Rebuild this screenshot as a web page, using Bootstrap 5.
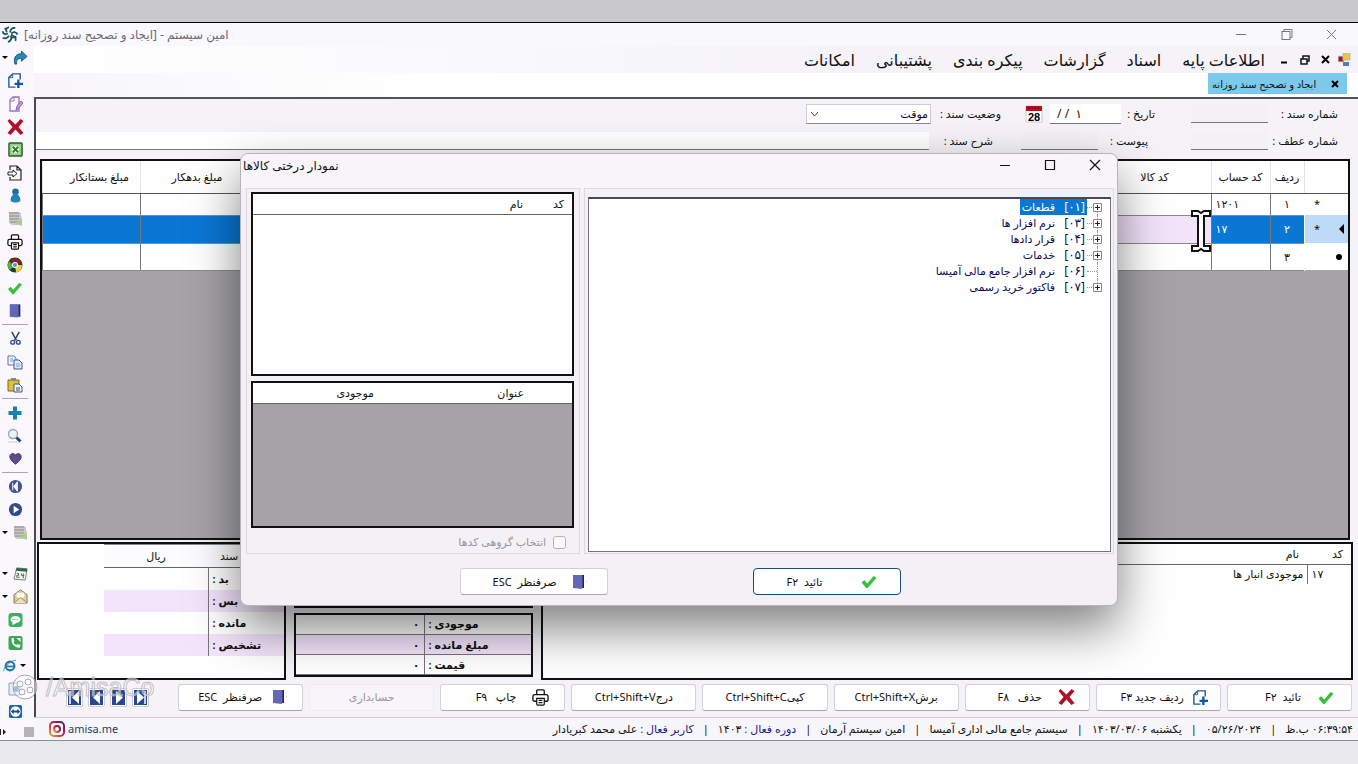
<!DOCTYPE html>
<html lang="fa">
<head>
<meta charset="utf-8">
<meta name="viewport" content="width=device-width, initial-scale=1">
<title>امین سیستم</title>
<link href="https://cdn.jsdelivr.net/npm/bootstrap@5.3.0/dist/css/bootstrap.min.css" rel="stylesheet">
<style>
  body { font-family: "Noto Sans", "DejaVu Sans", sans-serif; font-size: 11px; line-height: 16px; color: #111; background: #eaeaed; }
  button, input, select { font: inherit; color: inherit; }
  .strip-top { height: 23px; background: #c9c9cb; border-bottom: 1px solid #000; }
  .strip-end { height: 24px; border-top: 1px solid #8a8c9c; }
  .app { background: #f5f3f7; }
  .titlebar { height: 23px; background: #f9f8fc; color: #6c6a70; }
  .titlebar .caption { font-size: 12px; }
  .plain { border: 0; background: none; padding: 0; display: inline-flex; align-items: center; justify-content: center; }
  .win-btn { width: 45px; height: 22px; }
  .tools { width: 34px; flex: none; background: #faf8fc; }
  .tools .plain { height: 23px; width: 30px; position: relative; }
  .tools .drop::before { content: ""; position: absolute; left: 2px; top: 10px; border: 3px solid transparent; border-top-color: #000; border-bottom: 0; }
  .tools .drop svg { margin-left: 10px; }
  .tools .drop-end::before { left: 20px; }
  .tools .drop-end svg { margin-left: -10px; }
  .rule { width: 26px; height: 1px; margin: 2px; background: #a9a7ad; }
  .space { height: 18px; }
  .menu { height: 27px; background: linear-gradient(90deg, #fff, #f5f3f8 60%); padding-right: 7px; }
  .menu a { font-size: 16px; line-height: 24px; color: #111; text-decoration: none; }
  .tabs { height: 26px; background: linear-gradient(90deg, #f7f5f9, #fff 30%); border-bottom: 2px solid #55535a; padding: 0 11px 3px 0; }
  .doc-tab { background: #7cc9ec; height: 21px; width: 139px; font-size: 10px; }
  .sheet { border-left: 2px solid #4b4950; }
  .form-line { height: 30px; padding-right: 13px; }
  .form-line2 { height: 24px; }
  .form-line label { flex: none; white-space: nowrap; font-size: 11px; }
  .l1 { width: 77px; padding-right: 7px; }
  .l2 { width: 70px; padding-right: 36px; }
  .l3 { width: 87px; padding-right: 17px; }
  .l4 { width: 93px; padding-right: 43px; }
  .l5 { width: 92px; padding-right: 28px; }
  .field { border: 0; border-bottom: 1px solid #77757b; height: 18px; width: 77px; background: #f3f1f5; border-radius: 0; padding: 0 4px; min-width: 0; }
  .field-date { width: 71px; height: 20px; background: #fff; font-size: 12px; }
  .combo { width: 125px; height: 20px; background: #fff; border: 1px solid #cfccd3; border-bottom-color: #8d8b91; padding: 0 2px; appearance: none; }
  .combo-box { position: relative; }
  .combo-box svg { position: absolute; left: 4px; top: 6px; }
  .ledger { border: 2px solid #111; background: #a5a3a6; margin: 6px 8px 2px 4px; }
  .ledger table, .grid-table { width: 100%; table-layout: fixed; border-collapse: collapse; }
  .ledger th { height: 32px; background: #fff; font-weight: 400; text-align: center; border-bottom: 1px solid #555; border-left: 1px solid #e4e2e6; }
  .ledger td { height: 27px; background: #fff; border-left: 1px solid #77757b; border-bottom: 1px solid #8b898e; padding: 0 4px; }
  .ledger tr.short td { height: 22px; }
  .ledger tr.current td { background: #0a77d5; color: #fff; height: 28px; }
  .ledger tr.current td.mark { background: #bddaf6; color: #111; }
  .ledger tr.current td.item { background: #f2e3fb; }
  .ledger td.mark { border-bottom: 0; border-left-color: #fff; }
  .mark .lead-slot { width: 5px; flex: none; }
  .num { text-align: center; } .code { text-align: left !important; }
  .panels { height: 138px; gap: 8px; margin: 0 5px 0 1px; }
  .pane { border: 2px solid #111; background: #fff; }
  .grid-table th { font-weight: 400; height: 20px; border-bottom: 1px solid #666; text-align: right; }
  .grid-table td { height: 20px; padding: 0; }
  .totals td { height: 22px; font-weight: 600; }
  .totals th { height: 23px; text-align: center; background: #fcfbfd; border-top: 1px solid #888; }
  .totals td + td, .prices td + td { border-right: 1px solid #77757b; }
  .tint td { background: #f3e4fb; }
  .prices td { font-weight: 600; height: 20px; border-bottom: 1px solid #77757b; padding: 0 4px; }
  .actions { display: grid; grid-template-columns: repeat(9, minmax(0, 1fr)) 132px; align-items: center; height: 37px; gap: 6px; padding: 0 6px 3px 4px; }
  .act { height: 27px; background: #fff; border: 1px solid #d4d1d8; border-bottom-color: #aaa7af; border-radius: 3px; padding: 0; white-space: pre; min-width: 0; }
  .act:disabled { opacity: 1; background: #f7f5f9; border-color: #eeecf1; color: #9a989d; }
  .act svg { flex: none; }
  .early { justify-content: flex-start; padding-right: 17px; }
  .steps { padding-right: 23px; gap: 5px; }
  .step { width: 17px; height: 19px; border: 1px solid #cfccd6; border-radius: 2px; background: #fff; padding: 0; }
  .status { height: 23px; border-top: 1px solid #d0cdd4; background: #f7f6fa; padding: 0 5px 0 15px; }
  .status .bar { padding: 0 9px; }
  .status a { color: #1b3f66; text-decoration: none; margin-right: auto; gap: 3px; }
  .key { color: #1d1490; }
  .dialog { position: absolute; top: 153px; left: 50%; width: 878px; max-width: 100%; transform: translateX(-50%); background: #f3f1f5; border: 1px solid #b7b4bb; border-radius: 8px; box-shadow: 0 22px 50px rgba(0,0,0,.5); padding: 0 3px 0 5px; z-index: 5; }
  .dialog-head { height: 34px; margin: 0 -3px 0 -5px; padding-left: 2px; background: #f7f5fa; border-radius: 8px 8px 0 0; }
  .dialog-head span { font-size: 12px; line-height: 24px; }
  .group { border: 1px solid #dddae0; height: 366px; }
  .group-side { width: 334px; flex: none; padding: 3px 5px 0 4px; }
  .list-pane { height: 184px; }
  .stock-pane { height: 147px; background: #a5a3a6; margin-top: 5px; }
  .stock-pane th { background: #fff; }
  .tree-group { padding: 8px 2px 1px 3px; }
  .tree { height: 355px; background: #fff; border: 1px solid #77757b; border-top: 2px solid #4b4950; margin: 0; padding: 0 7px 0 0; list-style: none; color: #0c0c55; }
  .tree li { height: 16px; display: flex; align-items: center; position: relative; }
  .tree li::before { content: ""; position: absolute; right: 5px; top: 0; height: 16px; border-left: 1px dotted #999; }
  .tree li:last-child::before { height: 8px; } .tree li:first-child::before { top: 6px; height: 10px; }
  .knob { width: 11px; flex: none; position: relative; display: flex; justify-content: center; }
  .twig { width: 5px; border-top: 1px dotted #999; } .twig-long { width: 10px; margin-right: 6px; }
  .tree .tag { display: flex; height: 16px; padding: 0 2px; align-items: center; }
  .tree .tag b { font-weight: 400; width: 30px; font-size: 12px; }
  .picked { background: #0a77d5; color: #fff; }
  .dialog-foot { height: 51px; gap: 145px; padding-top: 4px; }
  .dialog-foot .act { flex: 0 0 148px; }
  .dialog-foot .main { border: 1px solid #1a4a77; border-radius: 4px; }
  .group-check { color: #98959c; height: 28px; }
  .group-check input { width: 13px; height: 13px; margin: 0; border-color: #b5b2ba; background: #faf9fb; }
  .watermark { position: absolute; left: 11px; bottom: 63px; z-index: 6; font: 25px/28px "Liberation Sans", sans-serif; color: rgba(255,255,255,.5); -webkit-text-stroke: 1px rgba(170,167,175,.7); pointer-events: none; }
  .caret { position: absolute; left: 1191px; top: 210px; z-index: 6; }
</style>
</head>
<body class="d-flex flex-column min-vh-100 position-relative overflow-hidden">
<svg width="0" height="0" class="position-absolute">
  <symbol id="redo" viewBox="0 0 16 16"><path d="M2 15C0 7 4 4 9 4V1l6 6-6 5V9C6 9 3 10 4 15z" fill="#2a86b4" stroke="#17597c"/></symbol>
  <symbol id="newdoc" viewBox="0 0 18 18"><path d="M9 16H2V6l4-4h8v6" fill="#fff" stroke="#245a9b" stroke-width="1.5"/><path d="M2 6h4V2" fill="none" stroke="#245a9b"/><path d="M12 8v9M8 12.500h9" stroke="#1356a8" stroke-width="2.500"/></symbol>
  <symbol id="edit" viewBox="0 0 16 16"><path d="M3 15h9V1H6L3 4z" fill="#fff" stroke="#9a6fb5" stroke-width="1.300"/><path d="M3 5h4V1" fill="none" stroke="#9a6fb5"/><path d="m9 14 1-4 4-5 2 2-4 5z" fill="#c79bdc" stroke="#8c5cab"/></symbol>
  <symbol id="cross" viewBox="0 0 16 16"><path d="M2 0 8 5.500 13 0l3 2-5 6 5 6-3 2-5-5.500L3 16l-3-2 5-6-5-6z" fill="#b00f28"/></symbol>
  <symbol id="excel" viewBox="0 0 16 16"><rect x="1" y="1" width="14" height="14" rx="1" fill="#8fd082" stroke="#2b5a2c" stroke-width="1.500"/><rect x="4" y="4" width="8" height="8" fill="#e8f8e2"/><path d="m5 5 6 6m0-6-6 6" stroke="#1f7a2c" stroke-width="2"/></symbol>
  <symbol id="export" viewBox="0 0 16 16"><path d="M3 5V1h7l4 4v10H3v-3M10 1v4h4" fill="none" stroke="#222" stroke-width="1.200"/><path d="M1 7h5V5l4 3.500L6 12v-2H1z" fill="#fff" stroke="#222"/></symbol>
  <symbol id="user" viewBox="0 0 16 16"><circle cx="8" cy="4" r="3.500" fill="#1c6e9f"/><path d="M8 5c3 2 6 5 5 9-3 2-7 2-10 0-1-4 2-7 5-9z" fill="#2285ba"/></symbol>
  <symbol id="servers" viewBox="0 0 16 16"><path d="M2 1h9l3 1v3l1 2v7H5l-3-2z" fill="#c9c9c5"/><path d="M2 2h10M2 5h10M2 8h10M3 11h9" stroke="#8a8a88" stroke-width="1"/><path d="m8 12 7-4v7z" fill="#a9cc8c"/></symbol>
  <symbol id="printer" viewBox="0 0 18 18"><path d="M5 6V2q0-1 1-1h6q1 0 1 1v4M5 13H3q-2 0-2-2V8q0-2 2-2h12q2 0 2 2v3q0 2-2 2h-2" fill="#fff" stroke="#111" stroke-width="1.400"/><path d="M5 10h8v6q0 1-1 1H6q-1 0-1-1zM7 12h4M7 14.500h4" fill="#fff" stroke="#111" stroke-width="1.300"/></symbol>
  <symbol id="chrome" viewBox="0 0 16 16"><circle cx="8" cy="8" r="7.500" fill="#183d2c"/><path d="M8 8 3 2q5-3 11 2l1 3z" fill="#8c2028"/><path d="M8 8h7q0 6-6 7.500z" fill="#f0cd3b"/><path d="M7 9 2 4q-3 6 1 9z" fill="#56ae3e"/><circle cx="8" cy="8" r="3" fill="#fff"/><circle cx="8" cy="8" r="2" fill="#5b8fc8"/></symbol>
  <symbol id="tick" viewBox="0 0 16 16"><path d="m0 9 3-2.500L6 10l7-8 3 2-9.500 11H5z" fill="#35c03d"/></symbol>
  <symbol id="door" viewBox="0 0 16 16"><path d="M2 1h11v13H2z" fill="#3b3f94"/><path d="M2 1h9v14l-9-1z" fill="#6468b4"/><path d="M12 1h1v13h-1" fill="#222659"/><path d="m15 6 1 2-1 1z" fill="#e4d79a"/></symbol>
  <symbol id="scissors" viewBox="0 0 16 16"><path d="M4 1 9 10M12 1 7 10" stroke="#39445c" stroke-width="1.600"/><circle cx="5" cy="12" r="2" fill="none" stroke="#2c4fa0" stroke-width="1.500"/><circle cx="11" cy="12" r="2" fill="none" stroke="#2c4fa0" stroke-width="1.500"/></symbol>
  <symbol id="copy" viewBox="0 0 16 16"><path d="M1 2h6l2 2v7H1z" fill="#eef3fc" stroke="#61779f"/><path d="M7 6h5l3 3v6H7z" fill="#dfe8f8" stroke="#3f5b93"/><path d="M3 5h3M3 7h3M9 10h4M9 12h4" stroke="#7f9cd0"/></symbol>
  <symbol id="paste" viewBox="0 0 16 16"><path d="M1 3h11v11H1z" fill="#e1c038" stroke="#7c661c"/><path d="M4 1h5v3H4z" fill="#8a8a8a"/><path d="M7 7h5l3 3v5H7z" fill="#f3f6fc" stroke="#3f5b93"/><path d="M9 11h4M9 13h4" stroke="#444"/></symbol>
  <symbol id="plus" viewBox="0 0 16 16"><path d="M6 1.500h4V6h4.500v4H10v4.500H6V10H1.500V6H6z" fill="#1681b3"/></symbol>
  <symbol id="lens" viewBox="0 0 16 16"><circle cx="6" cy="6" r="4.500" fill="#e8f2fb" stroke="#9aa6b5" stroke-width="1.300"/><path d="m9.500 9.500 4 4" stroke="#1d4a70" stroke-width="3"/><path d="M1 14h9" stroke="#ccc"/></symbol>
  <symbol id="heart" viewBox="0 0 16 16"><path d="M8 14Q1 9 2 5q2-4 6-1 4-3 6 1 1 4-6 9z" fill="#5e4a8b" stroke="#4a3977"/></symbol>
  <symbol id="prev" viewBox="0 0 16 16"><circle cx="8" cy="8" r="7" fill="#44548e"/><path d="M5 4v8" stroke="#fff"/><path d="M10 3 6 8l4 5z" fill="#fff" stroke="#fff"/></symbol>
  <symbol id="next" viewBox="0 0 16 16"><circle cx="8" cy="8" r="7" fill="#34488c"/><path d="m6 4 6 4-6 4z" fill="#fff"/></symbol>
  <symbol id="cal" viewBox="0 0 16 16"><path d="m4 2 11 1-2 12-12-1z" fill="#f4f4ee" stroke="#777"/><path d="m4 2 11 1v3L3 5z" fill="#2e6553"/><path d="M4 8h2v2H4v2h3M9 8v2h3M11 8v5" fill="none" stroke="#4b6a4c"/></symbol>
  <symbol id="mail" viewBox="0 0 16 16"><path d="m1 6 7-5 7 5v9H1z" fill="#e0cd9e" stroke="#8a774d"/><path d="M4 4h8v4l-4 3-4-3z" fill="#fff"/><path d="m1 15 7-6 7 6" fill="#f0e1ba" stroke="#9b8658"/></symbol>
  <symbol id="sms" viewBox="0 0 16 16"><rect x="1" y="1" width="14" height="14" rx="3" fill="#3fae62"/><ellipse cx="8" cy="7.500" rx="5" ry="3.500" fill="#fff"/><path d="m5 9 0 4 4-2z" fill="#fff"/><path d="M5 7.500h6" stroke="#3fae62" stroke-dasharray="1 1"/></symbol>
  <symbol id="phone" viewBox="0 0 16 16"><rect x="1" y="1" width="14" height="14" rx="2" fill="#3fa556"/><path d="M4 3q-1 8 8 10l1-3-3-1-1 1Q6 9 6 7l1-1-1-3zM9 3h4v4" fill="#fff"/></symbol>
  <symbol id="ie" viewBox="0 0 16 16"><circle cx="8" cy="8" r="5" fill="none" stroke="#1f77a8" stroke-width="2.500"/><path d="M4 8.500h9" stroke="#1f77a8" stroke-width="2"/><path d="M1 14Q0 10 7 5t8-3" fill="none" stroke="#2f8fc4"/></symbol>
  <symbol id="sheetic" viewBox="0 0 16 16"><path d="M2 2h11v12H2z" fill="#e8eef5" stroke="#8ba0b7"/><circle cx="9" cy="8" r="3" fill="#4a7fae"/></symbol>
  <symbol id="tv" viewBox="0 0 16 16"><rect x="1" y="1" width="14" height="14" rx="2" fill="#1769a8"/><circle cx="8" cy="8" r="5.500" fill="#fff"/><path d="m3 8 3-3v2h4V5l3 3-3 3V9H6v2z" fill="#17508a"/></symbol>
  <symbol id="swirl" viewBox="0 0 16 16"><g fill="none" stroke="#20505c" stroke-width="1.700"><path d="M7 1Q3 2 5 6M1 5q1 4 5 2M1 11q4 2 6-2M6 15q4-1 3-6M13 14q2-3-4-6M15 8q-2-4-6-1M13 2Q9 1 8 6M10 11l4-1M3 2l2 2"/></g></symbol>
  <symbol id="expand" viewBox="0 0 9 9"><path d="M.5.5h8v8h-8z" fill="#fff" stroke="#888"/><path d="M2 4.500h5M4.500 2v5" stroke="#222"/></symbol>
  <symbol id="stepicon" viewBox="0 0 13 15"><path d="M0 0h13v15H0z" fill="#27498c"/><path d="M10 1 3 7.500l7 6.500z" fill="#fff"/></symbol>
</svg>

<div class="strip-top"></div>
<div class="app d-flex flex-column flex-grow-1">
  <header class="titlebar d-flex align-items-center">
    <svg width="20" height="17"><use href="#swirl"/></svg>
    <span dir="rtl" class="caption px-1">امین سیستم - [ایجاد و تصحیح سند روزانه]</span>
    <div class="ms-auto d-flex pe-1">
      <button class="plain win-btn" aria-label="کوچک"><svg width="11" height="11"><path d="M0 5.500h10" stroke="#777"/></svg></button>
      <button class="plain win-btn" aria-label="بازگردانی"><svg width="12" height="12" fill="none" stroke="#777"><rect x="1" y="2.500" width="8" height="8"/><path d="M3 2.500v-2h8v8H9"/></svg></button>
      <button class="plain win-btn" aria-label="بستن"><svg width="11" height="11"><path d="m1 1 9 9m0-9-9 9" stroke="#777"/></svg></button>
    </div>
  </header>
  <div class="d-flex flex-grow-1">
    <nav class="tools d-flex flex-column">
      <button class="plain drop" aria-label="بازگشت"><svg width="15" height="15"><use href="#redo"/></svg></button>
      <button class="plain" aria-label="جدید"><svg width="17" height="17"><use href="#newdoc"/></svg></button>
      <button class="plain" aria-label="ویرایش"><svg width="16" height="16"><use href="#edit"/></svg></button>
      <button class="plain" aria-label="حذف"><svg width="17" height="16"><use href="#cross"/></svg></button>
      <button class="plain" aria-label="اکسل"><svg width="15" height="15"><use href="#excel"/></svg></button>
      <button class="plain" aria-label="ارسال"><svg width="16" height="16"><use href="#export"/></svg></button>
      <button class="plain" aria-label="کاربر"><svg width="15" height="15"><use href="#user"/></svg></button>
      <button class="plain" aria-label="سرور"><svg width="16" height="16"><use href="#servers"/></svg></button>
      <button class="plain" aria-label="چاپ"><svg width="16" height="16"><use href="#printer"/></svg></button>
      <button class="plain" aria-label="مرورگر"><svg width="16" height="16"><use href="#chrome"/></svg></button>
      <button class="plain" aria-label="تائید"><svg width="16" height="14"><use href="#tick"/></svg></button>
      <button class="plain" aria-label="خروج"><svg width="15" height="16"><use href="#door"/></svg></button>
      <div class="rule"></div>
      <button class="plain" aria-label="برش"><svg width="15" height="15"><use href="#scissors"/></svg></button>
      <button class="plain" aria-label="کپی"><svg width="16" height="16"><use href="#copy"/></svg></button>
      <button class="plain" aria-label="درج"><svg width="16" height="16"><use href="#paste"/></svg></button>
      <div class="rule"></div>
      <button class="plain" aria-label="افزودن"><svg width="16" height="16"><use href="#plus"/></svg></button>
      <button class="plain" aria-label="جستجو"><svg width="16" height="16"><use href="#lens"/></svg></button>
      <button class="plain" aria-label="علاقه"><svg width="15" height="15"><use href="#heart"/></svg></button>
      <div class="rule"></div>
      <button class="plain" aria-label="قبلی"><svg width="15" height="15"><use href="#prev"/></svg></button>
      <button class="plain" aria-label="بعدی"><svg width="15" height="15"><use href="#next"/></svg></button>
      <button class="plain drop" aria-label="گزارش"><svg width="16" height="16"><use href="#servers"/></svg></button>
      <div class="space"></div>
      <button class="plain drop" aria-label="تقویم"><svg width="15" height="15"><use href="#cal"/></svg></button>
      <button class="plain drop" aria-label="نامه"><svg width="15" height="15"><use href="#mail"/></svg></button>
      <button class="plain" aria-label="پیامک"><svg width="17" height="16"><use href="#sms"/></svg></button>
      <button class="plain" aria-label="تلفن"><svg width="17" height="16"><use href="#phone"/></svg></button>
      <button class="plain drop drop-end" aria-label="اینترنت"><svg width="14" height="14"><use href="#ie"/></svg></button>
      <button class="plain" aria-label="صفحه"><svg width="16" height="16"><use href="#sheetic"/></svg></button>
      <button class="plain" aria-label="پشتیبانی"><svg width="15" height="15"><use href="#tv"/></svg></button>
      <div class="d-flex align-items-center justify-content-between flex-grow-1"><svg width="8" height="8"><path d="M3 1l3 3-3 3z" fill="#222"/><path d="M0 1v6" stroke="#222" stroke-width="2"/></svg><svg width="10" height="10"><path d="M0 0h10v10H0z" fill="#b5b3b8"/></svg></div>
    </nav>
    <div class="flex-grow-1 d-flex flex-column" dir="rtl" style="min-width:0">
      <nav class="menu d-flex align-items-center">
        <svg width="14" height="14" viewBox="0 0 14 14"><path d="M1 3h6v6H1z" fill="#8b2020" stroke="#ddd"/><path d="M6 0h7v7H6z" fill="#e8c544" stroke="#bba"/><path d="M6 9h6v4H6z" fill="#5577bb"/></svg>
        <button class="plain" style="width:24px" aria-label="بستن سند"><svg width="9" height="9"><path d="m1 1 7 7m0-7-7 7" stroke="#000" stroke-width="2"/></svg></button>
        <button class="plain" style="width:16px" aria-label="بازگردانی سند"><svg width="10" height="10" fill="none" stroke="#111" stroke-width="1.500"><path d="M1 4h6v5H1zM3 4V1h6v5H7"/></svg></button>
        <button class="plain" style="width:25px" aria-label="کوچک کردن سند"><svg width="7" height="9"><path d="M0 7.500h6" stroke="#000" stroke-width="2"/></svg></button>
        <div class="d-flex" style="gap:21px;padding-right:7px">
          <a href="#">اطلاعات پایه</a><a href="#">اسناد</a><a href="#">گزارشات</a><a href="#">پیکره بندی</a><a href="#">پشتیبانی</a><a href="#">امکانات</a>
        </div>
      </nav>
      <div class="tabs d-flex align-items-center">
        <div class="doc-tab d-flex align-items-center justify-content-between px-1">
          <button class="plain px-1" aria-label="بستن برگه"><svg width="8" height="8"><path d="m1 1 6 6m0-6-6 6" stroke="#000" stroke-width="2"/></svg></button>
          <span class="text-nowrap">ایجاد و تصحیح سند روزانه</span>
        </div>
      </div>
      <main class="sheet flex-grow-1 d-flex flex-column">
        <div class="form-line d-flex align-items-center">
          <label class="l1" for="f1">شماره سند :</label><input id="f1" class="field">
          <label class="l2" for="f2">تاریخ :</label><input id="f2" class="field field-date" dir="ltr" value=" / /  ۱">
          <button class="plain" style="width:32px" aria-label="تقویم"><svg width="18" height="18" viewBox="0 0 18 18" direction="ltr"><path d="M1 1h16v16H1z" fill="#fff" stroke="#ccc"/><path d="M1 1h16v5H1z" fill="#b3131d"/><path d="M3 3h12" stroke="#4c0a0f" stroke-dasharray="2 1"/><text x="9" y="16" text-anchor="middle" font-size="11" font-weight="bold" font-family="Liberation Sans">28</text></svg></button>
          <label class="l3" for="f3">وضعیت سند :</label>
          <div class="combo-box"><select id="f3" class="combo"><option>موقت</option></select><svg width="9" height="8"><path d="m1 2 3.500 4L8 2" fill="none" stroke="#444"/></svg></div>
        </div>
        <div class="form-line form-line2 d-flex align-items-center">
          <label class="l1" for="f4">شماره عطف :</label><input id="f4" class="field">
          <label class="l4" for="f5">پیوست :</label><input id="f5" class="field">
          <label class="l5" for="f6">شرح سند :</label><input id="f6" class="field flex-grow-1 bg-white">
        </div>
        <div class="ledger flex-grow-1">
          <table>
            <colgroup><col style="width:44px"><col style="width:34px"><col style="width:59px"><col style="width:113px"><col><col style="width:113px"><col style="width:98px"></colgroup>
            <thead><tr><th></th><th>ردیف</th><th>کد حساب</th><th>کد کالا</th><th></th><th>مبلغ بدهکار</th><th class="pe-0 ps-3">مبلغ بستانکار</th></tr></thead>
            <tbody>
              <tr class="short"><td class="mark"><span class="d-flex align-items-center" style="gap:19px"><i class="lead-slot"></i>*</span></td><td class="num">۱</td><td class="code">۱۲۰۱</td><td></td><td></td><td></td><td></td></tr>
              <tr class="current"><td class="mark"><span class="d-flex align-items-center" style="gap:19px"><svg width="5" height="10"><path d="M5 0v10L0 5z"/></svg>*</span></td><td class="num">۲</td><td class="code">۱۷</td><td class="item"></td><td></td><td></td><td></td></tr>
              <tr><td class="mark"><svg width="8" height="6" class="d-block"><circle cx="3" cy="3" r="3"/></svg></td><td class="num">۳</td><td></td><td></td><td></td><td></td><td></td></tr>
            </tbody>
          </table>
        </div>
        <div class="panels d-flex">
          <div class="pane flex-grow-1">
            <table class="grid-table">
              <colgroup><col style="width:44px"><col></colgroup>
              <thead><tr><th class="pe-2">کد</th><th class="pe-2">نام</th></tr></thead>
              <tbody><tr><td class="code ps-1">۱۷</td><td style="border-right:1px solid #777;padding-right:3px">موجودی انبار ها</td></tr></tbody>
            </table>
          </div>
          <div class="d-flex flex-column" style="width:239px;flex:none;gap:5px">
            <div class="pane" style="height:67px"></div>
            <div class="pane flex-grow-1" style="margin-bottom:3px">
              <table class="grid-table prices">
                <colgroup><col style="width:107px"><col></colgroup>
                <tr><td class="code">موجودی :</td><td>۰</td></tr>
                <tr class="tint"><td class="code">مبلغ مانده :</td><td>۰</td></tr>
                <tr><td class="code">قیمت :</td><td>۰</td></tr>
              </table>
            </div>
          </div>
          <div class="pane" style="width:249px;flex:none">
            <table class="grid-table totals" style="width:180px">
              <colgroup><col style="width:76px"><col></colgroup>
              <thead><tr><th class="code" style="padding-left:12px">سند</th><th>ریال</th></tr></thead>
              <tbody>
                <tr><td class="code ps-1">بد :</td><td></td></tr>
                <tr class="tint"><td class="code ps-1">بس :</td><td></td></tr>
                <tr><td class="code ps-1">مانده :</td><td></td></tr>
                <tr class="tint"><td class="code ps-1">تشخیص :</td><td></td></tr>
              </tbody>
            </table>
          </div>
        </div>
        <div class="actions">
          <button class="act early d-flex align-items-center" style="gap:17px"><svg width="16" height="15"><use href="#tick"/></svg><span>تائید  F۲</span></button>
          <button class="act early d-flex align-items-center" style="gap:8px;padding-right:11px"><svg width="17" height="17"><use href="#newdoc"/></svg><span>ردیف جدید F۳</span></button>
          <button class="act early d-flex align-items-center" style="gap:16px;padding-right:14px"><svg width="17" height="16"><use href="#cross"/></svg><span>حذف   F۸</span></button>
          <button class="act">برشCtrl+Shift+X</button>
          <button class="act">کپیCtrl+Shift+C</button>
          <button class="act">درجCtrl+Shift+V</button>
          <button class="act early d-flex align-items-center" style="gap:16px;padding-right:15px"><svg width="17" height="17"><use href="#printer"/></svg><span>چاپ   F۹</span></button>
          <button class="act" disabled>حسابداری</button>
          <button class="act early d-flex align-items-center" style="gap:9px;padding-right:15px"><svg width="16" height="16"><use href="#door"/></svg><span>صرفنظر  ESC</span></button>
          <div class="steps d-flex">
            <button class="step plain" aria-label="آخرین"><svg width="13" height="15" viewBox="0 0 13 15"><path d="M0 0h13v15H0z" fill="#27498c"/><path d="m3 1 7 6.500L3 14z" fill="#fff"/><path d="M11 1v13" stroke="#fff" stroke-width="1.500"/></svg></button>
            <button class="step plain" aria-label="بعدی"><svg width="13" height="15" viewBox="0 0 13 15"><path d="M0 0h13v15H0z" fill="#27498c"/><path d="m4 1 7 6.500L4 14z" fill="#fff"/></svg></button>
            <button class="step plain" aria-label="قبلی"><svg width="13" height="15"><use href="#stepicon"/></svg></button>
            <button class="step plain" aria-label="اولین"><svg width="13" height="15" viewBox="0 0 13 15"><path d="M0 0h13v15H0z" fill="#27498c"/><path d="M11 1 4 7.500l7 6.500z" fill="#fff"/><path d="M2 1v13" stroke="#fff" stroke-width="1.500"/></svg></button>
          </div>
        </div>
      </main>
      <footer class="status d-flex align-items-center text-nowrap">
        <span>۰۶:۳۹:۵۴ ب.ظ</span><span class="bar">|</span><span>۰۵/۲۶/۲۰۲۴</span><span class="bar">|</span><span>یکشنبه ۱۴۰۳/۰۳/۰۶</span><span class="bar">|</span><span>سیستم جامع مالی اداری آمیسا</span><span class="bar">|</span><span>امین سیستم آرمان</span><span class="bar">|</span><span><span class="key">دوره فعال :</span> ۱۴۰۳</span><span class="bar">|</span><span><span class="key">کاربر فعال :</span> علی محمد کبریادار</span>
        <a href="#" dir="ltr" class="d-flex align-items-center"><svg width="16" height="16" viewBox="0 0 16 16"><defs><linearGradient id="ig" x1="0" y1="1" x2="1" y2="0"><stop offset="0" stop-color="#f0a030"/><stop offset=".5" stop-color="#c02050"/><stop offset="1" stop-color="#5a1c78"/></linearGradient></defs><rect x="1" y="1" width="14" height="14" rx="4" fill="#fff" stroke="url(#ig)" stroke-width="2"/><circle cx="8" cy="8" r="3" fill="none" stroke="url(#ig)" stroke-width="2"/></svg>amisa.me</a>
      </footer>
    </div>
  </div>
</div>
<div class="strip-end"></div>

<section class="dialog" role="dialog" aria-labelledby="dlg">
  <div class="dialog-head d-flex">
    <span id="dlg" dir="rtl">نمودار درختی کالاها</span>
    <div class="ms-auto d-flex">
      <button class="plain win-btn" aria-label="کوچک"><svg width="12" height="12"><path d="M1 6.500h10" stroke="#111"/></svg></button>
      <button class="plain win-btn" aria-label="بزرگ"><svg width="12" height="12"><path d="M1.500 1.500h9v9h-9z" fill="none" stroke="#111" stroke-width="1.200"/></svg></button>
      <button class="plain win-btn" aria-label="بستن"><svg width="12" height="12"><path d="m1 1 10 10m0-10L1 11" stroke="#111" stroke-width="1.200"/></svg></button>
    </div>
  </div>
  <div class="d-flex" style="gap:4px" dir="rtl">
    <div class="group tree-group flex-grow-1">
      <ul class="tree">
        <li><span class="knob"><svg width="9" height="9"><use href="#expand"/></svg></span><i class="twig"></i><span class="tag picked"><b>[۰۱]</b>قطعات</span></li>
        <li><span class="knob"><svg width="9" height="9"><use href="#expand"/></svg></span><i class="twig"></i><span class="tag"><b>[۰۳]</b>نرم افزار ها</span></li>
        <li><span class="knob"><svg width="9" height="9"><use href="#expand"/></svg></span><i class="twig"></i><span class="tag"><b>[۰۴]</b>قرار دادها</span></li>
        <li><span class="knob"><svg width="9" height="9"><use href="#expand"/></svg></span><i class="twig"></i><span class="tag"><b>[۰۵]</b>خدمات</span></li>
        <li><i class="twig twig-long"></i><span class="tag"><b>[۰۶]</b>نرم افزار جامع مالی آمیسا</span></li>
        <li><span class="knob"><svg width="9" height="9"><use href="#expand"/></svg></span><i class="twig"></i><span class="tag"><b>[۰۷]</b>فاکتور خرید رسمی</span></li>
      </ul>
    </div>
    <div class="group group-side">
      <div class="pane list-pane">
        <table class="grid-table"><colgroup><col style="width:41px"><col></colgroup><thead><tr><th class="pe-2">کد</th><th class="pe-2">نام</th></tr></thead></table>
      </div>
      <div class="pane stock-pane">
        <table class="grid-table"><colgroup><col style="width:190px"><col></colgroup><thead><tr><th style="padding-right:48px">عنوان</th><th class="pe-2">موجودی</th></tr></thead></table>
      </div>
      <div class="group-check d-flex align-items-center" style="gap:7px;padding-right:8px"><input class="form-check-input" type="checkbox" id="grp"><label for="grp">انتخاب گروهی کدها</label></div>
    </div>
  </div>
  <div class="dialog-foot d-flex align-items-center justify-content-center" dir="rtl">
    <button class="act main early d-flex align-items-center" style="gap:38px;padding-right:23px"><svg width="16" height="15"><use href="#tick"/></svg><span>تائید  F۲</span></button>
    <button class="act early d-flex align-items-center" style="gap:14px;padding-right:20px"><svg width="16" height="16"><use href="#door"/></svg><span>صرفنظر  ESC</span></button>
  </div>
</section>

<svg class="caret" width="20" height="42" viewBox="0 0 20 42"><path d="M1 1h6l3 2 3-2h6v5h-6v30h6v5h-6l-3-2-3 2H1v-5h6V6H1z" fill="#fff" stroke="#111" stroke-width="2"/></svg>
<div class="watermark d-flex align-items-center"><svg width="28" height="28" viewBox="0 0 28 28" fill="rgba(255,255,255,.5)" stroke="rgba(150,147,155,.8)"><circle cx="14" cy="14" r="12"/><circle cx="9" cy="11" r="3"/><circle cx="17" cy="9" r="3"/><circle cx="11" cy="19" r="3"/><circle cx="19" cy="17" r="3"/></svg><span style="padding-left:7px">/AmisaCo</span></div>
</body>
</html>
